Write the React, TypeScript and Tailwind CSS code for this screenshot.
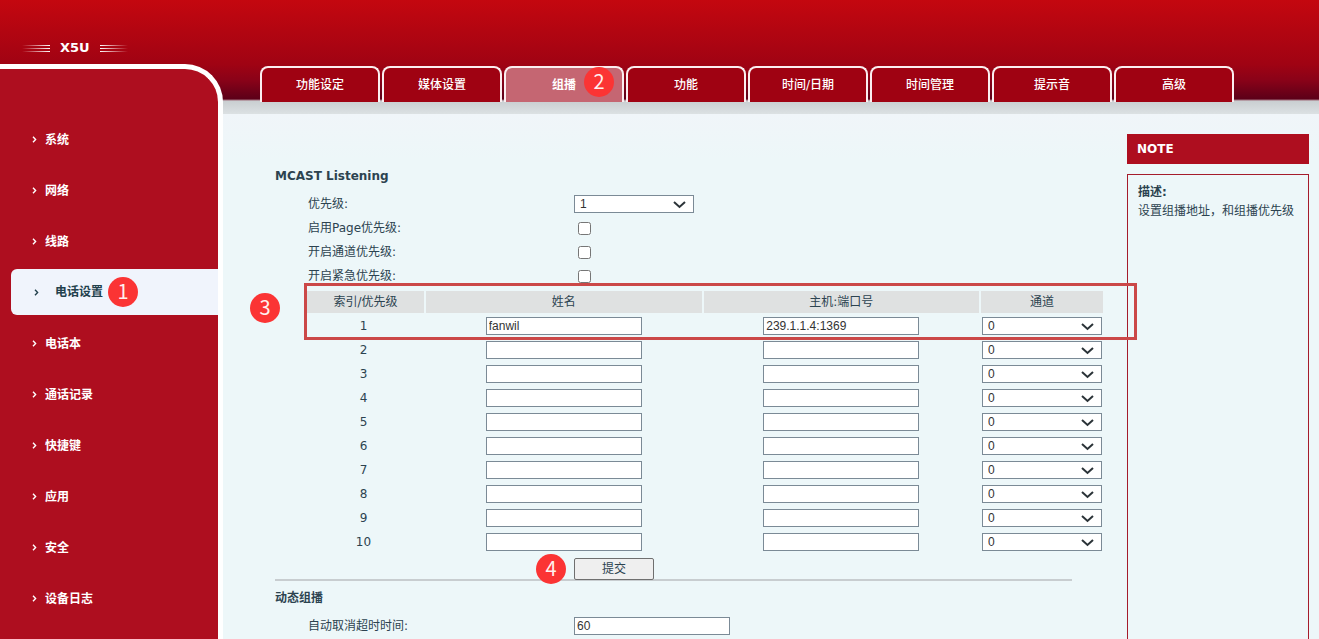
import React, { useState } from 'react';
import clsx from 'clsx';

const menuItems = ['系统', '网络', '线路', '电话设置', '电话本', '通话记录', '快捷键', '应用', '安全', '设备日志'];
const tabs = ['功能设定', '媒体设置', '组播', '功能', '时间/日期', '时间管理', '提示音', '高级'];

const priorities = ['1', '2', '3', '4', '5', '6', '7', '8', '9', '10'];
const channels = ['0', '1', '2', '3', '4', '5', '6', '7', '8', '9', '10'];

const mcastRows = [
  { name: 'fanwil', host: '239.1.1.4:1369' },
  ...Array.from({ length: 9 }, () => ({ name: '', host: '' })),
];

// Numbered step marker
const Step: React.FC<{ n: number; className?: string }> = ({ n, className }) => (
  <span
    className={clsx(
      'absolute z-20 flex size-[30px] items-center justify-center rounded-full bg-[#fb3434] pb-[3px] font-["Noto_Sans_CJK_SC",sans-serif] text-xl leading-none font-normal text-[#fff0ee]',
      className
    )}
  >
    {n}
  </span>
);

const Chevron: React.FC<{ className?: string }> = ({ className }) => (
  <svg className={className} width="5" height="7" viewBox="0 0 5 7" fill="none" stroke="currentColor" strokeWidth="1.4">
    <path d="M1 0.8 L3.6 3.5 L1 6.2" />
  </svg>
);

type SelectBoxProps = { id?: string; label?: string; options: string[]; initial: string };

const SelectBox: React.FC<SelectBoxProps> = ({ id, label, options, initial }) => (
  <span className="relative inline-block h-[18px] w-[120px] align-top">
    <select
      id={id}
      aria-label={label}
      defaultValue={initial}
      className='block h-[18px] w-full appearance-none border border-[#7b8a96] bg-white pl-[5px] font-["Liberation_Sans",sans-serif] text-xs leading-4 text-[#333]'
    >
      {options.map((option) => (
        <option key={option}>{option}</option>
      ))}
    </select>
    <svg
      className="pointer-events-none absolute top-[6px] right-2"
      width="13"
      height="8"
      viewBox="0 0 13 8"
      fill="none"
      stroke="#2b3338"
      strokeWidth="2"
    >
      <path d="M1 1 L6.5 6 L12 1" />
    </svg>
  </span>
);

type TextBoxProps = { id?: string; label?: string; initial: string };

const TextBox: React.FC<TextBoxProps> = ({ id, label, initial }) => (
  <input
    id={id}
    aria-label={label}
    type="text"
    defaultValue={initial}
    className='inline-block h-[18px] w-[156px] border border-[#7b8a96] bg-white px-[2px] align-top font-["Liberation_Sans",sans-serif] text-xs leading-4 text-[#333]'
  />
);

const FormRow: React.FC<{ id: string; label: string; children: React.ReactNode }> = ({ id, label, children }) => (
  <div className="grid h-6 grid-cols-[266px_1fr] items-center pl-[33px]">
    <label htmlFor={id}>{label}</label>
    <div className="flex items-center">{children}</div>
  </div>
);

const Sidebar: React.FC = () => (
  <div className="flex w-[223px] shrink-0 flex-col">
    <div className="flex h-16 items-end gap-[10px] pb-2 pl-[22px]">
      <div className="flex h-4 w-7 flex-col justify-center gap-[2px]">
        <i className="h-px bg-linear-to-r from-transparent to-white" />
        <i className="h-px bg-linear-to-r from-transparent to-white" />
        <i className="h-px bg-linear-to-r from-transparent to-white" />
      </div>
      <strong className="text-[13px] leading-4 text-white">X5U</strong>
      <div className="flex h-4 w-7 flex-col justify-center gap-[2px]">
        <i className="h-px bg-linear-to-l from-transparent to-white" />
        <i className="h-px bg-linear-to-l from-transparent to-white" />
        <i className="h-px bg-linear-to-l from-transparent to-white" />
      </div>
    </div>
    <nav className="flex-1 rounded-tr-[38px] border-t-[5px] border-r-[5px] border-white bg-[#ae0e1f] pt-[45px]">
      <ul>
        {menuItems.map((item) => {
          const active = item === '电话设置';
          return (
            <li key={item} className={clsx('flex h-[51px] items-center', active && 'pb-px pl-[11px]')}>
              <a
                href="#"
                className={clsx(
                  'relative flex items-center font-bold',
                  active
                    ? 'h-[46px] w-full gap-4 rounded-l-md bg-[#f0f4fc] pl-[23px] text-[#22404c]'
                    : 'gap-2 pl-8 text-white'
                )}
              >
                <Chevron />
                {item}
                {active && <Step n={1} className="left-[97px]" />}
              </a>
            </li>
          );
        })}
      </ul>
    </nav>
  </div>
);

const Tabs: React.FC<{ current: string; onChange: (tab: string) => void }> = ({ current, onChange }) => (
  <div className="flex h-[102px] items-end gap-[2px] pl-[37px]">
    {tabs.map((tab) => (
      <button
        key={tab}
        type="button"
        onClick={() => onChange(tab)}
        className={clsx(
          'relative h-9 w-[120px] rounded-t-lg border-2 border-b-0 border-[#fbeef0] text-white',
          tab === current ? 'bg-[#c56672] font-bold' : 'bg-[#9f0212] font-medium'
        )}
      >
        {tab}
        {tab === '组播' && <Step n={2} className="-top-px left-[78px]" />}
      </button>
    ))}
  </div>
);

const McastTable: React.FC = () => (
  <div className="relative -mr-px ml-[30px]">
    <table className="w-full table-fixed border-separate border-spacing-[2px] text-center">
      <thead>
        <tr className="h-[22px]">
          <th className="w-[117px] bg-[#dfe1e1] p-0 font-normal">索引/优先级</th>
          <th className="bg-[#dfe1e1] p-0 font-normal">姓名</th>
          <th className="bg-[#dfe1e1] p-0 font-normal">主机:端口号</th>
          <th className="w-[122px] bg-[#dfe1e1] p-0 font-normal">通道</th>
        </tr>
      </thead>
      <tbody>
        {mcastRows.map((row, i) => (
          <tr key={i} className="h-[22px]">
            <td className="p-0 pr-1 align-middle">{i + 1}</td>
            <td className="px-0 py-[2px]">
              <TextBox label={`姓名 ${i + 1}`} initial={row.name} />
            </td>
            <td className="px-0 py-[2px]">
              <TextBox label={`主机:端口号 ${i + 1}`} initial={row.host} />
            </td>
            <td className="px-0 py-[2px]">
              <SelectBox label={`通道 ${i + 1}`} options={channels} initial="0" />
            </td>
          </tr>
        ))}
      </tbody>
    </table>
    <div className="pointer-events-none absolute -top-[6px] -right-8 -left-px z-10 h-[57px] border-[3px] border-[#cb4848]" />
    <Step n={3} className="top-1 -left-[55px]" />
  </div>
);

export default function App() {
  const [tab, setTab] = useState('组播');

  return (
    <div className='flex min-h-screen bg-[#edf7f9] bg-[linear-gradient(to_bottom,#c4070f_0px,#a00313_64px,#8a0218_80px,#5c0018_99px,#a06a78_100px,#c9ced1_101px,#dce1e3_114px,#f0f5f9_114px,#edf7f9_160px)] bg-no-repeat font-["DejaVu_Sans","Noto_Sans_CJK_SC",sans-serif] text-xs text-[#2c4350]'>
      <Sidebar />
      <div className="flex min-w-0 flex-1 flex-col">
        <Tabs current={tab} onChange={setTab} />
        <div className="flex flex-1 pt-3">
          <main className="relative z-10 min-w-0 flex-1 pt-[50px] pr-[23px] pl-[52px]">
            <h2 className="mb-1 h-6 leading-6 font-bold">MCAST Listening</h2>
            <FormRow id="priority" label="优先级:">
              <SelectBox id="priority" options={priorities} initial="1" />
            </FormRow>
            <FormRow id="page-priority" label="启用Page优先级:">
              <input id="page-priority" type="checkbox" className="ml-1" />
            </FormRow>
            <FormRow id="channel-priority" label="开启通道优先级:">
              <input id="channel-priority" type="checkbox" className="ml-1" />
            </FormRow>
            <FormRow id="urgent-priority" label="开启紧急优先级:">
              <input id="urgent-priority" type="checkbox" className="ml-1" />
            </FormRow>
            <div className="pt-px">
              <McastTable />
            </div>
            <div className="relative z-10 h-6 pt-[3px] pl-[299px]">
              <button
                type="button"
                className="block h-[22px] w-20 rounded-xs border border-[#6f6f6f] bg-[#efefef] text-xs leading-4"
              >
                提交
              </button>
              <Step n={4} className="-top-px left-[261px]" />
            </div>
            <hr className="mr-8 border-t-2 border-[#c8cdd0]" />
            <h2 className="mt-[5px] mb-1 h-6 leading-6 font-bold">动态组播</h2>
            <FormRow id="cancel-timeout" label="自动取消超时时间:">
              <TextBox id="cancel-timeout" initial="60" />
            </FormRow>
          </main>
          <aside className="mr-[10px] flex w-[182px] shrink-0 flex-col pt-5">
            <h3 className="h-[30px] bg-[#ae0e1f] pl-[10px] leading-[30px] font-bold text-white">NOTE</h3>
            <div className="mt-[10px] flex-1 border border-b-0 border-[#a51c2c] px-[10px] pt-2">
              <strong className="block leading-[18px]">描述:</strong>
              <p className="leading-5">设置组播地址，和组播优先级</p>
            </div>
          </aside>
        </div>
      </div>
    </div>
  );
}
